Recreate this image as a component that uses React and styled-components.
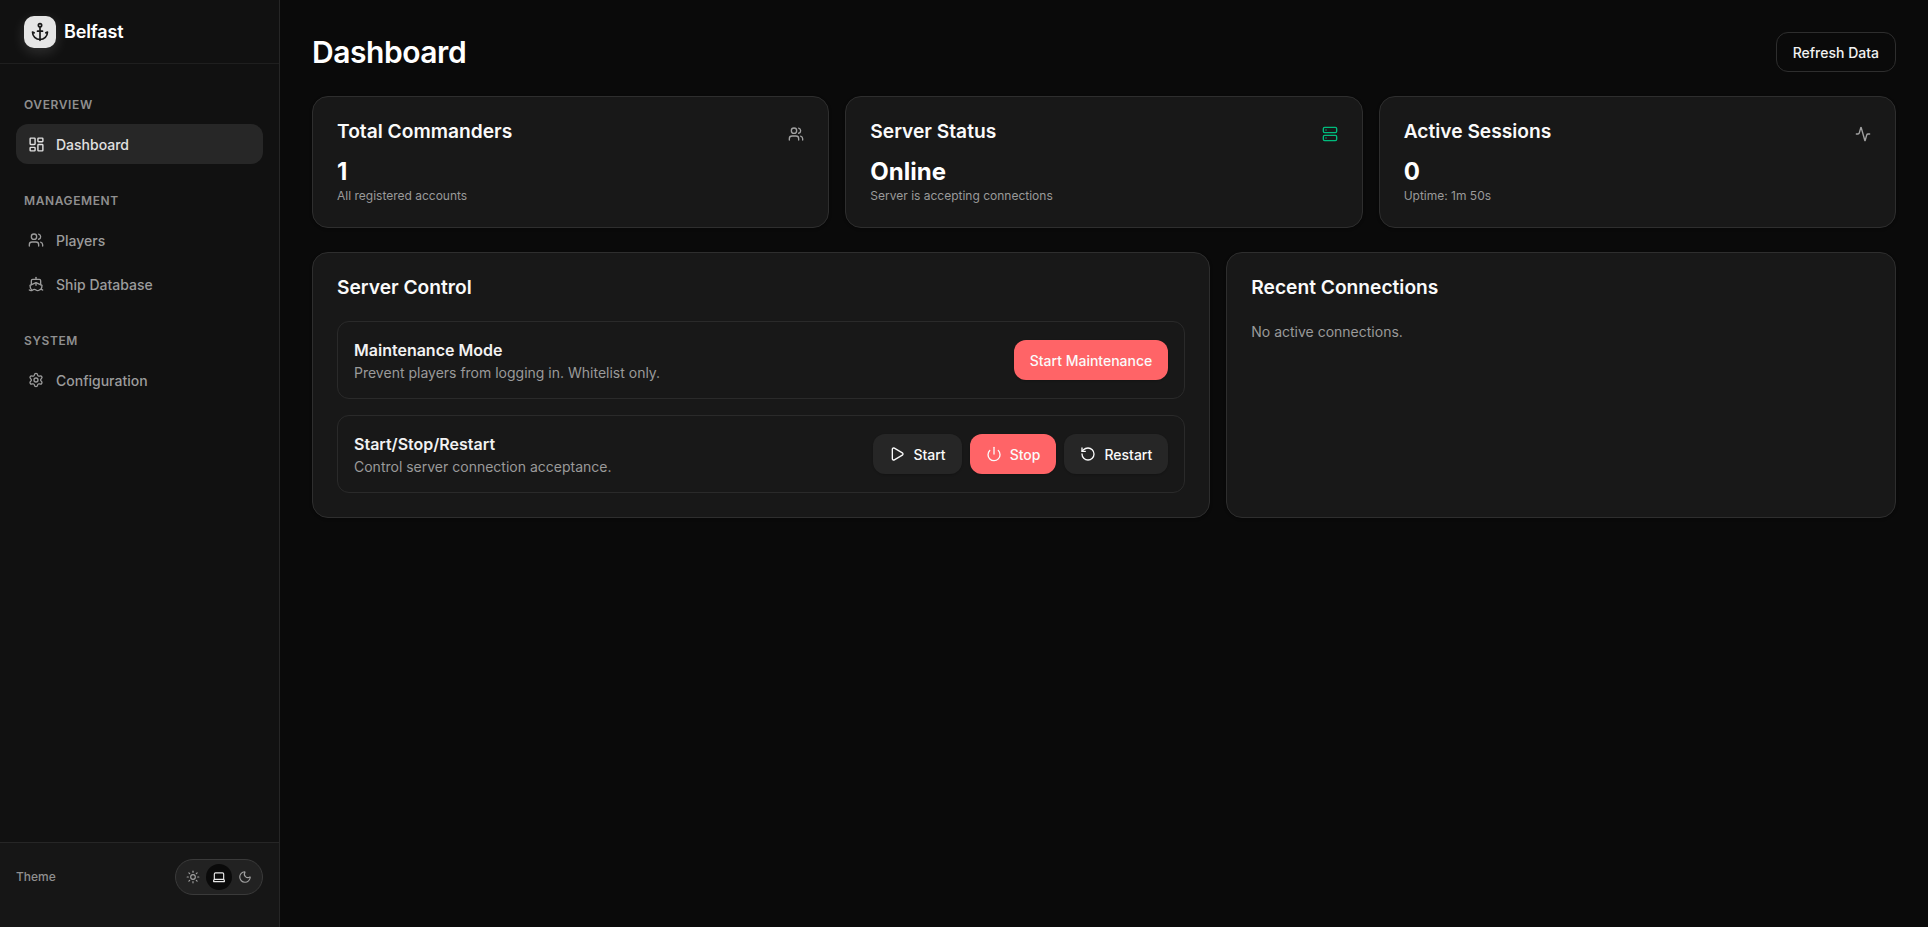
import React from "react";
import styled, { createGlobalStyle } from "styled-components";
import {
  Activity,
  Anchor,
  Laptop,
  LayoutDashboard,
  Moon,
  Play,
  Power,
  RotateCcw,
  Server,
  Settings,
  Ship,
  Sun,
  Users,
} from "lucide-react";

const GlobalStyle = createGlobalStyle`
  * {
    box-sizing: border-box;
  }
  html, body {
    margin: 0;
    height: 100%;
    background: #0a0a0a;
    color: #fafafa;
    font-family: "Inter", "Liberation Sans", sans-serif;
    overflow: hidden;
  }
`;

const Shell = styled.div`
  display: flex;
  height: 100vh;
`;

const Sidebar = styled.aside`
  width: 280px;
  flex-shrink: 0;
  display: flex;
  flex-direction: column;
  background: #111111;
  border-right: 1px solid #262626;
`;

const Brand = styled.div`
  height: 64px;
  display: flex;
  align-items: center;
  gap: 8px;
  padding: 0 24px;
  border-bottom: 1px solid #1f1f1f;
`;

const LogoTile = styled.div`
  width: 32px;
  height: 32px;
  display: flex;
  align-items: center;
  justify-content: center;
  border-radius: 10px;
  background: #e5e5e5;
  color: #171717;
  box-shadow: 0 4px 14px rgba(255, 255, 255, 0.14);
`;

const BrandName = styled.span`
  font-size: 18px;
  font-weight: 600;
  letter-spacing: -0.15px;
  color: #ffffff;
`;

const Nav = styled.nav`
  flex: 1;
  display: flex;
  flex-direction: column;
  gap: 28px;
  padding: 32px 16px 0;
`;

const Section = styled.div`
  display: flex;
  flex-direction: column;
  gap: 4px;
`;

const SectionLabel = styled.div`
  font-size: 12px;
  line-height: 16px;
  font-weight: 600;
  letter-spacing: 0.6px;
  text-transform: uppercase;
  color: #8f8f8f;
  padding: 1px 0 0 8px;
  margin-bottom: 7px;
`;

const NavItem = styled.a`
  height: 40px;
  display: flex;
  align-items: center;
  gap: 12px;
  padding: 0 12px;
  border-radius: 12px;
  font-size: 14px;
  font-weight: 500;
  color: ${(p) => (p.$active ? "#e0e0e0" : "#9c9c9c")};
  background: ${(p) => (p.$active ? "#272727" : "transparent")};
`;

const NavIcon = styled.span`
  width: 16px;
  display: flex;
  justify-content: center;
  svg {
    flex-shrink: 0;
  }
`;

const SidebarFooter = styled.div`
  height: 85px;
  display: flex;
  align-items: flex-start;
  justify-content: space-between;
  padding: 16px 16px 0;
  background: #161616;
  border-top: 1px solid #262626;
`;

const ThemeLabel = styled.span`
  font-size: 12px;
  line-height: 36px;
  font-weight: 500;
  color: #8f8f8f;
`;

const ThemeSwitch = styled.div`
  display: flex;
  padding: 4px;
  border: 1px solid #3a3a3a;
  border-radius: 18px;
  background: #222222;
`;

const ThemeOption = styled.span`
  width: 26px;
  height: 26px;
  display: flex;
  align-items: center;
  justify-content: center;
  border-radius: 50%;
  color: ${(p) => (p.$active ? "#e8e8e8" : "#a1a1a1")};
  background: ${(p) => (p.$active ? "#0a0a0a" : "transparent")};
`;

const Main = styled.main`
  flex: 1;
  min-width: 0;
  padding: 32px;
  display: flex;
  flex-direction: column;
  gap: 24px;
`;

const PageHeader = styled.header`
  display: flex;
  align-items: center;
  justify-content: space-between;
`;

const PageTitle = styled.h1`
  margin: 0;
  font-size: 30px;
  line-height: 40px;
  font-weight: 600;
  letter-spacing: -0.45px;
  color: #ffffff;
`;

const OutlineButton = styled.button`
  height: 40px;
  padding: 0 16px;
  border: 1px solid #2e2e2e;
  border-radius: 12px;
  background: transparent;
  color: #f2f2f2;
  font: 500 14px "Inter", sans-serif;
`;

const StatGrid = styled.div`
  display: grid;
  grid-template-columns: repeat(3, 1fr);
  gap: 16px;
`;

const Card = styled.section`
  padding: 24px;
  border: 1px solid #2e2e2e;
  border-radius: 16px;
  background: #181818;
  box-shadow: 0 1px 3px rgba(0, 0, 0, 0.3);
`;

const StatHead = styled.div`
  height: 20px;
  display: flex;
  justify-content: space-between;
  align-items: flex-start;
  margin-bottom: 15px;
  color: ${(p) => p.$tint || "#a1a1a1"};
  svg {
    margin-top: 5px;
  }
`;

const CardTitle = styled.h2`
  margin: 0;
  font-size: 19.2px;
  line-height: 20px;
  font-weight: 600;
  color: #fafafa;
`;

const StatValue = styled.div`
  font-size: 24px;
  line-height: 32px;
  font-weight: 700;
  color: #ffffff;
`;

const StatNote = styled.div`
  font-size: 12px;
  line-height: 15px;
  color: #9a9a9a;
`;

const PanelGrid = styled.div`
  display: grid;
  grid-template-columns: repeat(7, 1fr);
  gap: 16px;
`;

const Panel = styled(Card)`
  grid-column: span ${(p) => p.$span};
  display: flex;
  flex-direction: column;
  gap: 24px;
`;

const ControlList = styled.div`
  display: flex;
  flex-direction: column;
  gap: 16px;
`;

const ControlRow = styled.div`
  display: flex;
  align-items: center;
  justify-content: space-between;
  padding: 16px;
  border: 1px solid #2a2a2a;
  border-radius: 12px;
`;

const RowTitle = styled.div`
  font-size: 16px;
  line-height: 24px;
  font-weight: 600;
  color: #f2f2f2;
`;

const MutedText = styled.div`
  font-size: 14px;
  line-height: 20px;
  padding-top: 1px;
  margin-bottom: -1px;
  color: #9a9a9a;
`;

const ButtonGroup = styled.div`
  display: flex;
  gap: 8px;
`;

const ActionButton = styled.button`
  height: 40px;
  display: flex;
  align-items: center;
  gap: 8px;
  padding: 0 16px;
  border: 0;
  border-radius: 12px;
  background: ${(p) => (p.$danger ? "#ff6467" : "#262626")};
  color: #fafafa;
  font: 500 14px "Inter", sans-serif;
  box-shadow: 0 1px 2px rgba(0, 0, 0, 0.2);
`;

const navSections = [
  { label: "Overview", items: [{ name: "Dashboard", icon: LayoutDashboard, size: 17, active: true }] },
  {
    label: "Management",
    items: [
      { name: "Players", icon: Users, size: 16 },
      { name: "Ship Database", icon: Ship, size: 16 },
    ],
  },
  { label: "System", items: [{ name: "Configuration", icon: Settings, size: 16 }] },
];

const stats = [
  { title: "Total Commanders", icon: Users, value: "1", note: "All registered accounts" },
  { title: "Server Status", icon: Server, tint: "#00bc7d", value: "Online", note: "Server is accepting connections" },
  { title: "Active Sessions", icon: Activity, value: "0", note: "Uptime: 1m 50s" },
];

export default function App() {
  return (
    <Shell>
      <GlobalStyle />
      <Sidebar>
        <Brand>
          <LogoTile>
            <Anchor size={20} />
          </LogoTile>
          <BrandName>Belfast</BrandName>
        </Brand>
        <Nav>
          {navSections.map((section) => (
            <Section key={section.label}>
              <SectionLabel>{section.label}</SectionLabel>
              {section.items.map((item) => (
                <NavItem key={item.name} $active={item.active}>
                  <NavIcon>
                    <item.icon size={item.size} />
                  </NavIcon>
                  {item.name}
                </NavItem>
              ))}
            </Section>
          ))}
        </Nav>
        <SidebarFooter>
          <ThemeLabel>Theme</ThemeLabel>
          <ThemeSwitch>
            <ThemeOption>
              <Sun size={14} />
            </ThemeOption>
            <ThemeOption $active>
              <Laptop size={14} />
            </ThemeOption>
            <ThemeOption>
              <Moon size={14} />
            </ThemeOption>
          </ThemeSwitch>
        </SidebarFooter>
      </Sidebar>
      <Main>
        <PageHeader>
          <PageTitle>Dashboard</PageTitle>
          <OutlineButton>Refresh Data</OutlineButton>
        </PageHeader>
        <StatGrid>
          {stats.map((stat) => (
            <Card key={stat.title}>
              <StatHead $tint={stat.tint}>
                <CardTitle>{stat.title}</CardTitle>
                <stat.icon size={16} />
              </StatHead>
              <StatValue>{stat.value}</StatValue>
              <StatNote>{stat.note}</StatNote>
            </Card>
          ))}
        </StatGrid>
        <PanelGrid>
          <Panel $span={4}>
            <CardTitle>Server Control</CardTitle>
            <ControlList>
              <ControlRow>
                <div>
                  <RowTitle>Maintenance Mode</RowTitle>
                  <MutedText>Prevent players from logging in. Whitelist only.</MutedText>
                </div>
                <ActionButton $danger>Start Maintenance</ActionButton>
              </ControlRow>
              <ControlRow>
                <div>
                  <RowTitle>Start/Stop/Restart</RowTitle>
                  <MutedText>Control server connection acceptance.</MutedText>
                </div>
                <ButtonGroup>
                  <ActionButton>
                    <Play size={16} />
                    Start
                  </ActionButton>
                  <ActionButton $danger>
                    <Power size={16} />
                    Stop
                  </ActionButton>
                  <ActionButton>
                    <RotateCcw size={16} />
                    Restart
                  </ActionButton>
                </ButtonGroup>
              </ControlRow>
            </ControlList>
          </Panel>
          <Panel $span={3}>
            <CardTitle>Recent Connections</CardTitle>
            <MutedText>No active connections.</MutedText>
          </Panel>
        </PanelGrid>
      </Main>
    </Shell>
  );
}
